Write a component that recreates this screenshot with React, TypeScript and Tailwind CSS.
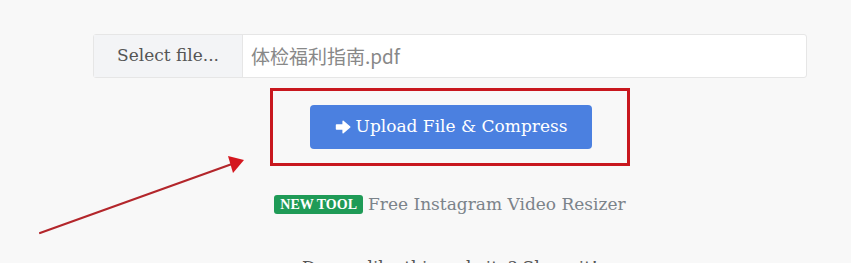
import React from "react";

function ArrowRightIcon() {
  return (
    <svg width="16" height="16" viewBox="0 0 16 16" className="shrink-0">
      <path
        d="M1.5 6h6.6V2.2L14.8 8l-6.7 5.8V10H1.5z"
        fill="#ffffff"
        stroke="#ffffff"
        strokeWidth="1.4"
        strokeLinejoin="round"
      />
    </svg>
  );
}

function PointerArrow() {
  return (
    <svg
      className="absolute left-0 top-0 pointer-events-none"
      width="851"
      height="263"
      viewBox="0 0 851 263"
    >
      <line x1="40" y1="233" x2="232" y2="164" stroke="#b3262b" strokeWidth="2.2" strokeLinecap="round" />
      <path d="M244 160 L228 156 L233 173 Z" fill="#d4171f" />
    </svg>
  );
}

export default function App() {
  return (
    <div
      className="relative w-[851px] h-[263px] overflow-hidden bg-[#f8f8f8]"
      style={{ fontFamily: '"DejaVu Serif", "Liberation Serif", "Noto Sans CJK SC", serif' }}
    >
      <div className="ml-[93px] w-[714px] pt-[34px] flex flex-col items-center">
        <div className="w-full h-[44px] flex border border-[#e6e6e6] rounded-[3px] bg-white">
          <div className="w-[149px] shrink-0 flex items-center justify-center bg-[#f3f4f6] border-r border-[#e6e6e6] text-[17px] text-[#555]">
            Select file...
          </div>
          <div
            className="flex-1 flex items-center pl-[8px] text-[19px] text-[#888]"
            style={{ fontFamily: '"Noto Sans CJK SC", "Noto Sans", sans-serif' }}
          >
            体检福利指南.pdf
          </div>
        </div>

        <div className="mt-[10px] w-[360px] h-[78px] border-[3px] border-[#c8171e] flex items-center justify-center pl-[2px]">
          <button className="w-[282px] h-[44px] rounded-[4px] bg-[#4b80e0] flex items-center justify-center gap-[5px] text-white text-[17px]">
            <ArrowRightIcon />
            <span>Upload File &amp; Compress</span>
          </button>
        </div>

        <div className="mt-[26px] flex items-center gap-[5px]">
          <span
            className="h-[19px] px-[6px] rounded-[3px] bg-[#1f9b57] text-white text-[14px] font-bold flex items-center"
            style={{ fontFamily: '"Liberation Serif", serif' }}
          >
            NEW TOOL
          </span>
          <span className="text-[17px] text-[#7b838a]">Free Instagram Video Resizer</span>
        </div>

        <div className="mt-[37px] text-[17px] text-[#555]">Do you like this website? Share it!</div>
      </div>
      <PointerArrow />
    </div>
  );
}
